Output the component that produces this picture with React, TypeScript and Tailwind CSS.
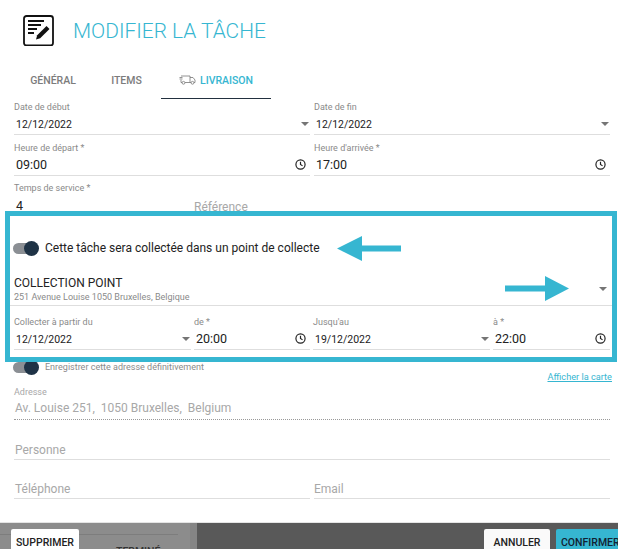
import { ReactNode } from 'react';

function Caret() {
  return <span className="absolute right-[1px] top-[9px] w-0 h-0 border-x-[4px] border-x-transparent border-t-[4px] border-t-[#757575]" />;
}

function Clock() {
  return (
    <svg className="absolute right-[4px] top-[5px]" width="11" height="11" viewBox="0 0 24 24" fill="none" stroke="#222" strokeWidth="2.6">
      <circle cx="12" cy="12" r="10" />
      <path d="M12 6v6l4.5 3" />
    </svg>
  );
}

function Field({ label, value, icon, className }: { label: string; value: string; icon: 'caret' | 'clock'; className: string }) {
  return (
    <div className={className}>
      <div className="h-[12px] text-[9px] leading-[12px] text-[#8a8a8a]">{label}</div>
      <div className={`relative h-[22px] border-b border-[#dedede] pl-[2px] text-[#222] ${icon === 'clock' ? 'text-[12.5px] leading-[21px]' : 'text-[10.5px] leading-[23px]'}`}>
        {value}
        {icon === 'caret' ? <Caret /> : <Clock />}
      </div>
    </div>
  );
}

function Toggle() {
  return (
    <div className="relative h-[15px] w-[26px] shrink-0">
      <div className="absolute left-0 top-[2px] h-[11px] w-[22px] rounded-full bg-[#8b8f94]" />
      <div className="absolute right-0 top-0 h-[15px] w-[15px] rounded-full bg-[#1f3346]" />
    </div>
  );
}

function PlainField({ children, className }: { children: ReactNode; className: string }) {
  return <div className={`h-[22px] border-b border-[#dedede] text-[12px] leading-[25px] text-[#a8a8a8] ${className}`}>{children}</div>;
}

export default function App() {
  return (
    <div className="relative flex h-[549px] w-[618px] flex-col overflow-hidden bg-white font-['Roboto',sans-serif]">
      <header className="flex h-[62px] shrink-0 items-start pl-[23px] pt-[15px]">
        <svg width="31" height="31" viewBox="0 0 31 31" fill="none">
          <rect x="1" y="1" width="29" height="29.5" rx="2.5" stroke="#111" strokeWidth="1.8" />
          <path d="M5 6h16M5 10h13M5 14h9M5 18h6" stroke="#111" strokeWidth="1.8" />
          <path d="M13 24.5l1.2-4.3L23.5 11l3 3-9.3 9.2z" fill="#111" />
        </svg>
        <h1 className="ml-[19px] mt-[3px] text-[20.9px] font-light leading-[26px] text-[#36b6d1]">MODIFIER LA TÂCHE</h1>
      </header>

      <nav className="flex h-[37px] shrink-0 pl-[14px] text-[10.5px] font-medium">
        <div className="w-[78px] pt-[11px] text-center text-[#7c7c7c]">GÉNÉRAL</div>
        <div className="w-[69px] pt-[11px] text-center text-[#7c7c7c]">ITEMS</div>
        <div className="flex h-[37px] w-[110px] items-start justify-center gap-[4px] border-b border-[#22303f] pt-[11px] text-[#36b6d1]">
          <svg className="mt-[1px]" width="17" height="11" viewBox="0 0 17 11" fill="none" stroke="#777" strokeWidth="0.8">
            <path d="M2 2h9v6.5H6M3 8.5H2V6M0.5 3.5h3M0.5 5h3M11 3.5h3l2 2.5v2.5h-1M11 8.5h1" />
            <circle cx="4.5" cy="8.8" r="1.4" />
            <circle cx="13.5" cy="8.8" r="1.4" />
          </svg>
          LIVRAISON
        </div>
      </nav>

      <div className="mt-[2px] flex flex-col pl-[14px] pr-[8px]">
        <div className="flex gap-[4px]">
          <Field className="w-[296px]" label="Date de début" value="12/12/2022" icon="caret" />
          <Field className="w-[296px]" label="Date de fin" value="12/12/2022" icon="caret" />
        </div>
        <div className="mt-[7px] flex gap-[4px]">
          <Field className="w-[296px]" label="Heure de départ *" value="09:00" icon="clock" />
          <Field className="w-[296px]" label="Heure d'arrivée *" value="17:00" icon="clock" />
        </div>
        <div className="mt-[6px] flex h-[29px]">
          <div className="w-[180px]">
            <div className="h-[12px] text-[9px] leading-[12px] text-[#8a8a8a]">Temps de service *</div>
            <div className="pl-[2px] text-[12.5px] leading-[24px] text-[#222]">4</div>
          </div>
          <div className="pt-[17px] text-[12px] leading-[16px] text-[#a8a8a8]">Référence</div>
        </div>
      </div>

      <section className="relative z-10 ml-[5px] h-[151px] w-[612px] shrink-0 border-[5px] border-[#36b6d1]">
        <div className="flex items-center gap-[6px] pl-[3px] pt-[25px] text-[12px] leading-[15px] text-[#222]">
          <Toggle />
          <span>Cette tâche sera collectée dans un point de collecte</span>
        </div>
        <div className="relative mt-[20px] h-[30px] border-b border-[#dedede] pl-[4px]">
          <div className="text-[12px] leading-[14px] text-[#222]">COLLECTION POINT</div>
          <div className="mt-[1px] text-[9px] leading-[12px] text-[#8a8a8a]">251 Avenue Louise 1050 Bruxelles, Belgique</div>
          <span className="absolute right-[5px] top-[11px] h-0 w-0 border-x-[4px] border-x-transparent border-t-[4px] border-t-[#757575]" />
        </div>
        <div className="mt-[10px] flex gap-[3px] pl-[4px] pr-[1px]">
          <Field className="w-[177px]" label="Collecter à partir du" value="12/12/2022" icon="caret" />
          <Field className="w-[116px]" label="de *" value="20:00" icon="clock" />
          <Field className="w-[177px]" label="Jusqu'au" value="19/12/2022" icon="caret" />
          <Field className="w-[117px]" label="à *" value="22:00" icon="clock" />
        </div>
      </section>

      <svg className="absolute left-[337px] top-[236px] z-20" width="64" height="25" viewBox="0 0 64 25" fill="#36b6d1">
        <path d="M0 12.5L25 0v9.5h39v6H25V25z" />
      </svg>
      <svg className="absolute left-[505px] top-[276px] z-20" width="64" height="25" viewBox="0 0 64 25" fill="#36b6d1">
        <path d="M64 12.5L40 0v9.5H0v6h40V25z" />
      </svg>

      <div className="-mt-[2px] flex items-center gap-[6px] pl-[13px] text-[9px] leading-[15px] text-[#8a8a8a]">
        <Toggle />
        <span>Enregistrer cette adresse définitivement</span>
      </div>
      <div className="-mt-[4px] pr-[6px] text-right text-[9.2px] leading-[12px] text-[#36b6d1] underline">Afficher la carte</div>

      <div className="mt-[3px] pl-[14px] pr-[8px]">
        <div className="text-[9px] leading-[12px] text-[#a8a8a8]">Adresse</div>
        <div className="h-[22px] border-b border-dotted border-[#999] pl-[1px] text-[12px] leading-[20px] text-[#a8a8a8]">Av. Louise 251,&nbsp; 1050 Bruxelles,&nbsp; Belgium</div>
      </div>
      <div className="mt-[18px] pl-[14px] pr-[8px]">
        <PlainField className="pl-[1px]">Personne</PlainField>
      </div>
      <div className="mt-[17px] flex gap-[4px] pl-[14px] pr-[8px]">
        <PlainField className="w-[296px] pl-[1px]">Téléphone</PlainField>
        <PlainField className="w-[296px]">Email</PlainField>
      </div>

      <footer className="absolute bottom-0 left-0 flex h-[27px] w-full border-t border-[#e4e4e4] bg-[#595959]">
        <div className="relative h-full w-[197px] overflow-hidden bg-[#8c8c8c]">
          <div className="absolute left-0 top-[11px] h-[1px] w-[178px] bg-[#7d7d7d]" />
          <div className="absolute left-[190px] top-0 h-full w-[7px] bg-[#858585]" />
          <div className="absolute left-[116px] top-[21px] text-[10.5px] font-medium text-[#333]">TERMINÉ</div>
        </div>
        <div className="absolute left-[11px] top-[6px] h-[30px] w-[68px] rounded-[2px] bg-white pl-[5px] pt-[6px] text-[10.5px] font-medium text-[#222]">SUPPRIMER</div>
        <div className="absolute left-[484px] top-[6px] h-[30px] w-[66px] rounded-[2px] bg-[#fafafa] pt-[6px] text-center text-[10.5px] font-medium text-[#222]">ANNULER</div>
        <div className="absolute left-[556px] top-[6px] h-[30px] w-[70px] rounded-[2px] bg-[#36b6d1] pl-[5px] pt-[6px] text-[10.5px] font-medium text-[#123]">CONFIRMER</div>
      </footer>
    </div>
  );
}
